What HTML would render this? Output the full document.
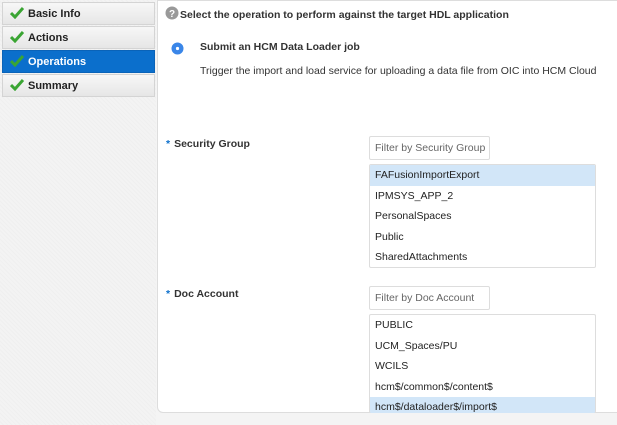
<!DOCTYPE html>
<html><head><style>
body{margin:0;width:617px;height:425px;background:#f4f4f4;font-family:"Liberation Sans",Arial,sans-serif;position:relative;overflow:hidden;font-size:10.5px;color:#333}
.side{position:absolute;left:0;top:0;width:156px;height:425px;background:repeating-linear-gradient(45deg,#f3f3f3 0 2px,#efefef 2px 3px)}
.nav{position:absolute;left:2px;width:153px;height:23px;background:linear-gradient(#f7f7f7,#e6e6e6);border:1px solid #d4d4d4;box-sizing:border-box;font-weight:bold;font-size:11px;line-height:22px;padding-left:25px;color:#222}
.nav.sel{background:#0b6fcc;color:#fff;border-color:#0a63b8}
.nav svg{position:absolute;left:7px;top:4px}
.main{position:absolute;left:157px;top:0;width:470px;height:413px;background:#fff;border:1px solid #ddd;border-radius:0 0 6px 6px;box-sizing:border-box}
.a{position:absolute;white-space:nowrap}
.inp{position:absolute;border:1px solid #ddd;border-radius:2px;box-sizing:border-box;color:#666;padding-left:5px;line-height:22px;font-size:10.5px;white-space:nowrap;overflow:hidden}
.list{position:absolute;border:1px solid #ddd;border-radius:2px;box-sizing:border-box;overflow:hidden}
.list div{height:20.5px;line-height:20.5px;padding-left:5px;color:#222}
.list .s{background:#d2e6f8}
.lab{font-weight:bold;font-size:10.5px;color:#333}
.lab b{color:#0b6fcc;margin-right:4px}
</style></head><body>
<div class="side"></div>
<div class="nav" style="top:2px"><svg width="14" height="12" viewBox="0 0 14 12"><path d="M1 6l4 4 8-9" stroke="#3aa533" stroke-width="3" fill="none"/></svg>Basic Info</div>
<div class="nav" style="top:26px"><svg width="14" height="12" viewBox="0 0 14 12"><path d="M1 6l4 4 8-9" stroke="#3aa533" stroke-width="3" fill="none"/></svg>Actions</div>
<div class="nav sel" style="top:50px"><svg width="14" height="12" viewBox="0 0 14 12"><path d="M1 6l4 4 8-9" stroke="#3aa533" stroke-width="3" fill="none"/></svg>Operations</div>
<div class="nav" style="top:74px"><svg width="14" height="12" viewBox="0 0 14 12"><path d="M1 6l4 4 8-9" stroke="#3aa533" stroke-width="3" fill="none"/></svg>Summary</div>
<div class="main"></div>
<svg class="a" style="left:165px;top:6px" width="14" height="14"><circle cx="7" cy="7" r="6.5" fill="#999"/><text x="7" y="11" font-size="10" font-weight="bold" fill="#fff" text-anchor="middle" font-family="Liberation Sans">?</text></svg>
<div class="a" style="left:180px;top:9px;font-weight:bold;color:#333">Select the operation to perform against the target HDL application</div>
<svg class="a" style="left:171px;top:42px" width="13" height="13"><circle cx="6.5" cy="6.5" r="6" fill="#3a86e8"/><circle cx="6.5" cy="6.5" r="1.6" fill="#fff"/></svg>
<div class="a" style="left:200px;top:41px;font-weight:bold;color:#333">Submit an HCM Data Loader job</div>
<div class="a" style="left:200px;top:65px;color:#333">Trigger the import and load service for uploading a data file from OIC into HCM Cloud</div>
<div class="a lab" style="left:166px;top:138px"><b>*</b>Security Group</div>
<div class="inp" style="left:369px;top:136px;width:121px;height:24px">Filter by Security Group</div>
<div class="list" style="left:369px;top:164px;width:227px;height:104px">
<div class="s">FAFusionImportExport</div><div>IPMSYS_APP_2</div><div>PersonalSpaces</div><div>Public</div><div>SharedAttachments</div></div>
<div class="a lab" style="left:166px;top:288px"><b>*</b>Doc Account</div>
<div class="inp" style="left:369px;top:286px;width:121px;height:24px">Filter by Doc Account</div>
<div class="list" style="left:369px;top:314px;width:227px;height:99px;border-bottom:none">
<div>PUBLIC</div><div>UCM_Spaces/PU</div><div>WCILS</div><div>hcm$/common$/content$</div><div class="s">hcm$/dataloader$/import$</div></div>
</body></html>
